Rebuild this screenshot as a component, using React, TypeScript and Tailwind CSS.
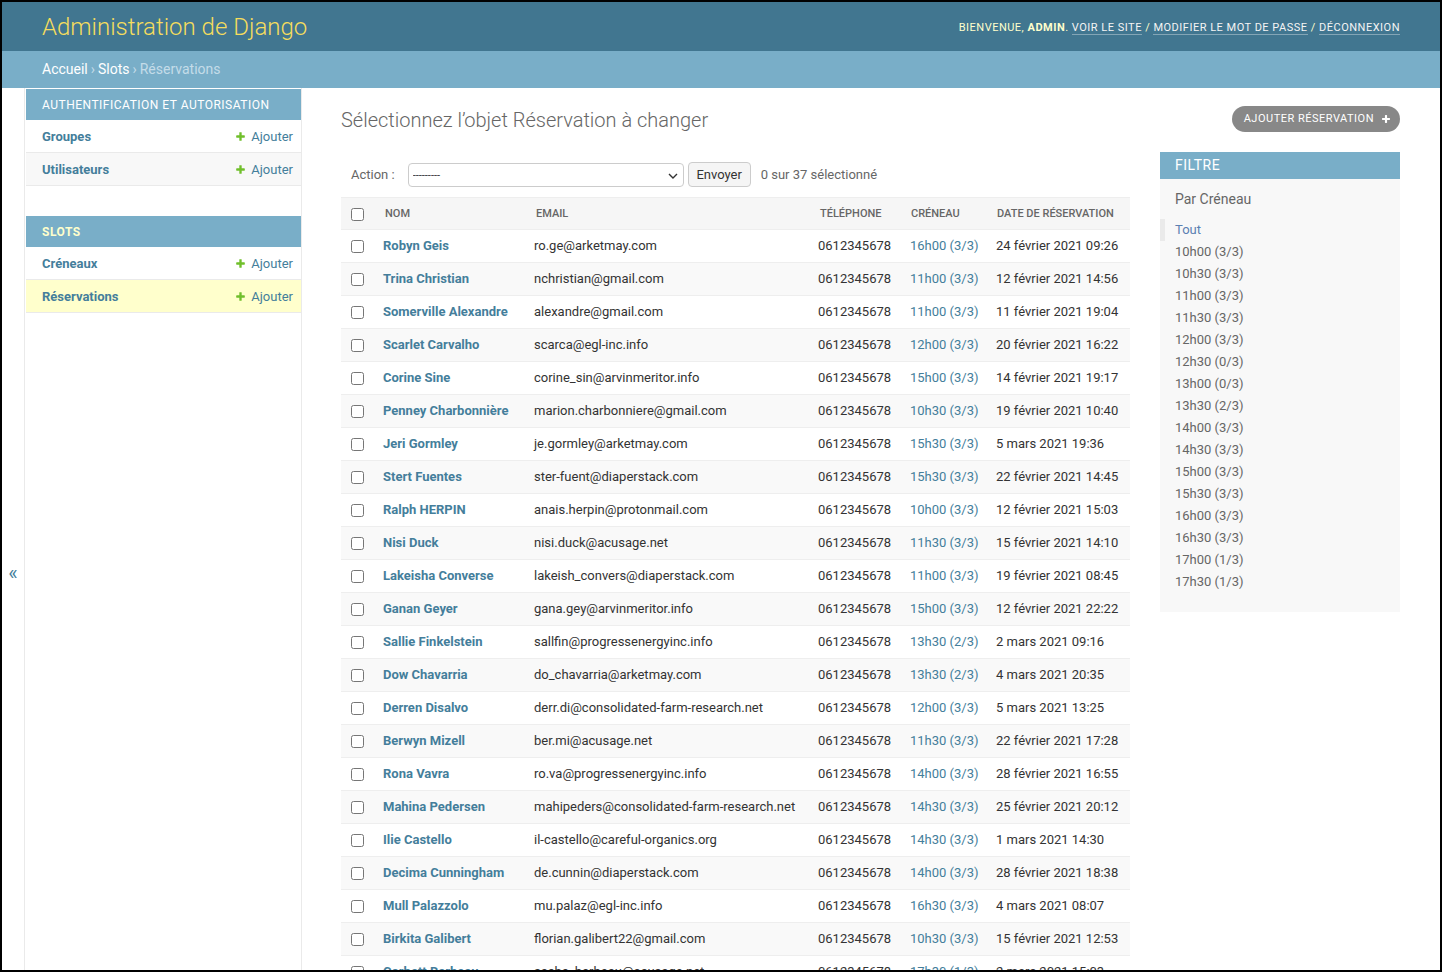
import React from "react";

const rows: [string, string, string, string][] = [
  ["Robyn Geis", "ro.ge@arketmay.com", "16h00 (3/3)", "24 février 2021 09:26"],
  ["Trina Christian", "nchristian@gmail.com", "11h00 (3/3)", "12 février 2021 14:56"],
  ["Somerville Alexandre", "alexandre@gmail.com", "11h00 (3/3)", "11 février 2021 19:04"],
  ["Scarlet Carvalho", "scarca@egl-inc.info", "12h00 (3/3)", "20 février 2021 16:22"],
  ["Corine Sine", "corine_sin@arvinmeritor.info", "15h00 (3/3)", "14 février 2021 19:17"],
  ["Penney Charbonnière", "marion.charbonniere@gmail.com", "10h30 (3/3)", "19 février 2021 10:40"],
  ["Jeri Gormley", "je.gormley@arketmay.com", "15h30 (3/3)", "5 mars 2021 19:36"],
  ["Stert Fuentes", "ster-fuent@diaperstack.com", "15h30 (3/3)", "22 février 2021 14:45"],
  ["Ralph HERPIN", "anais.herpin@protonmail.com", "10h00 (3/3)", "12 février 2021 15:03"],
  ["Nisi Duck", "nisi.duck@acusage.net", "11h30 (3/3)", "15 février 2021 14:10"],
  ["Lakeisha Converse", "lakeish_convers@diaperstack.com", "11h00 (3/3)", "19 février 2021 08:45"],
  ["Ganan Geyer", "gana.gey@arvinmeritor.info", "15h00 (3/3)", "12 février 2021 22:22"],
  ["Sallie Finkelstein", "sallfin@progressenergyinc.info", "13h30 (2/3)", "2 mars 2021 09:16"],
  ["Dow Chavarria", "do_chavarria@arketmay.com", "13h30 (2/3)", "4 mars 2021 20:35"],
  ["Derren Disalvo", "derr.di@consolidated-farm-research.net", "12h00 (3/3)", "5 mars 2021 13:25"],
  ["Berwyn Mizell", "ber.mi@acusage.net", "11h30 (3/3)", "22 février 2021 17:28"],
  ["Rona Vavra", "ro.va@progressenergyinc.info", "14h00 (3/3)", "28 février 2021 16:55"],
  ["Mahina Pedersen", "mahipeders@consolidated-farm-research.net", "14h30 (3/3)", "25 février 2021 20:12"],
  ["Ilie Castello", "il-castello@careful-organics.org", "14h30 (3/3)", "1 mars 2021 14:30"],
  ["Decima Cunningham", "de.cunnin@diaperstack.com", "14h00 (3/3)", "28 février 2021 18:38"],
  ["Mull Palazzolo", "mu.palaz@egl-inc.info", "16h30 (3/3)", "4 mars 2021 08:07"],
  ["Birkita Galibert", "florian.galibert22@gmail.com", "10h30 (3/3)", "15 février 2021 12:53"],
  ["Corbett Barbeau", "sacha_barbeau@acusage.net", "17h30 (1/3)", "2 mars 2021 15:03"],
];

const slots = [
  "10h00 (3/3)", "10h30 (3/3)", "11h00 (3/3)", "11h30 (3/3)", "12h00 (3/3)", "12h30 (0/3)",
  "13h00 (0/3)", "13h30 (2/3)", "14h00 (3/3)", "14h30 (3/3)", "15h00 (3/3)", "15h30 (3/3)",
  "16h00 (3/3)", "16h30 (3/3)", "17h00 (1/3)", "17h30 (1/3)",
];

function Plus({ color, size = 10 }: { color: string; size?: number }) {
  return (
    <svg width={size} height={size} viewBox="0 0 1792 1792" className="shrink-0">
      <path
        fill={color}
        d="M1600 796v192q0 40-28 68t-68 28h-416v416q0 40-28 68t-68 28h-192q-40 0-68-28t-28-68v-416h-416q-40 0-68-28t-28-68v-192q0-40 28-68t68-28h416v-416q0-40 28-68t68-28h192q40 0 68 28t28 68v416h416q40 0 68 28t28 68z"
      />
    </svg>
  );
}

function NavRow({ label, shaded, current }: { label: string; shaded?: boolean; current?: boolean }) {
  return (
    <div
      className={
        "h-[33px] border-b border-[#eaeaea] flex items-center justify-between pl-[16px] pr-[8px] pt-[1px] " +
        (current ? "bg-[#ffffcc]" : shaded ? "bg-[#f8f8f8]" : "bg-white")
      }
    >
      <span className="font-bold text-[#447e9b] text-[13px]">{label}</span>
      <span className="flex items-center gap-[5px] text-[#447e9b] text-[13px]">
        <Plus color="#70bf2b" size={11} />
        Ajouter
      </span>
    </div>
  );
}

function Checkbox() {
  return <input type="checkbox" className="m-0 w-[13px] h-[13px] align-middle block" readOnly />;
}

export default function App() {
  return (
    <div className="w-[1442px] h-[972px] overflow-hidden border-2 border-black bg-white font-['Roboto',sans-serif] text-[13px] text-[#333] flex flex-col">
      {/* Header */}
      <div className="h-[49px] shrink-0 bg-[#417690] flex items-center justify-between px-[40px]">
        <div className="text-[24px] font-light text-[#f5dd5d] leading-[28px]">Administration de Django</div>
        <div className="text-[11px] tracking-[0.5px] uppercase text-[#ffffcc] leading-[14px] mt-[2px]">
          Bienvenue, <strong className="font-bold">admin</strong>.{" "}
          <span className="text-[#f4f4f4] border-b border-[rgba(255,255,255,0.35)]">Voir le site</span> /{" "}
          <span className="text-[#f4f4f4] border-b border-[rgba(255,255,255,0.35)]">Modifier le mot de passe</span> /{" "}
          <span className="text-[#f4f4f4] border-b border-[rgba(255,255,255,0.35)]">Déconnexion</span>
        </div>
      </div>
      {/* Breadcrumbs */}
      <div className="h-[37px] shrink-0 bg-[#79aec8] flex items-center px-[40px] text-[14px] text-[#c4dce8]">
        <span className="text-white">Accueil</span>
        <span className="mx-[3px]">›</span>
        <span className="text-white">Slots</span>
        <span className="mx-[3px]">›</span>
        <span>Réservations</span>
      </div>
      {/* Main */}
      <div className="flex flex-1 min-h-0">
        <div className="w-[23px] shrink-0 h-[972px] border-r border-[#eaeaea] flex items-center justify-center text-[#447e9b] text-[20px] leading-none">
          <span className="mb-[2px]">«</span>
        </div>
        <div className="w-[277px] shrink-0 border-r border-[#eaeaea] pt-[1px] pl-[1px]">
          <div className="mb-[30px]">
            <div className="h-[31px] bg-[#79aec8] text-white flex items-center pl-[16px] text-[12px] tracking-[0.5px] uppercase">
              Authentification et autorisation
            </div>
            <NavRow label="Groupes" />
            <NavRow label="Utilisateurs" shaded />
          </div>
          <div>
            <div className="h-[31px] bg-[#79aec8] text-[#ffffcc] font-bold flex items-center pl-[16px] text-[12px] tracking-[0.5px] uppercase">
              Slots
            </div>
            <NavRow label="Créneaux" />
            <NavRow label="Réservations" current />
          </div>
        </div>
        {/* Content */}
        <div className="flex-1 pl-[39px] pr-[40px] pt-[20px] min-w-0">
          <div className="flex justify-between items-start">
            <h1 className="text-[20px] font-light text-[#666] leading-[24px]">
              Sélectionnez l’objet Réservation à changer
            </h1>
            <div className="mt-[-2px] h-[26px] rounded-full bg-[#888] text-white flex items-center pl-[12px] pr-[9px] gap-[7px] text-[11px] tracking-[0.5px] uppercase">
              Ajouter réservation
              <Plus color="#ffffff" size={10} />
            </div>
          </div>
          <div className="flex gap-[30px] mt-[20px]">
            <div className="flex-1 min-w-0">
              <div className="p-[10px] flex items-center text-[#666] leading-[24px] h-[45px]">
                <span>Action :</span>
                <div className="relative ml-[13px]">
                  <select className="appearance-none w-[276px] h-[24px] border border-[#cccccc] rounded-[4px] bg-white pl-[4px] text-[11px] text-[#333] block">
                    <option>---------</option>
                  </select>
                  <svg width="10" height="6" viewBox="0 0 10 6" className="absolute right-[6px] top-[10px] pointer-events-none">
                    <path d="M1 1l4 4 4-4" stroke="#333" strokeWidth="1.4" fill="none" />
                  </svg>
                </div>
                <button className="ml-[4px] h-[25px] w-[63px] border border-[#cccccc] rounded-[4px] bg-[#f5f5f5] text-[#333] text-[13px] leading-[23px]">
                  Envoyer
                </button>
                <span className="ml-[10px]">0 sur 37 sélectionné</span>
              </div>
              <table className="w-full table-fixed border-collapse">
                <colgroup>
                  <col className="w-[34px]" />
                  <col className="w-[151px]" />
                  <col className="w-[284px]" />
                  <col className="w-[92px]" />
                  <col className="w-[87px]" />
                  <col />
                </colgroup>
                <thead>
                  <tr className="h-[32px] bg-[#f6f6f6] border-t border-b border-[#eeeeee] text-[11px] uppercase text-[#666] text-left">
                    <th className="pl-[10px] font-normal pt-[1px]"><Checkbox /></th>
                    <th className="pl-[10px] font-medium pt-[1px]">Nom</th>
                    <th className="pl-[10px] font-medium pt-[1px]">Email</th>
                    <th className="pl-[10px] font-medium whitespace-nowrap pt-[1px]">Téléphone</th>
                    <th className="pl-[9px] font-medium pt-[1px]">Créneau</th>
                    <th className="pl-[8px] font-medium whitespace-nowrap pt-[1px]">Date de réservation</th>
                  </tr>
                </thead>
                <tbody>
                  {rows.map((r, i) => (
                    <tr
                      key={i}
                      className={"h-[33px] border-b border-[#eeeeee] " + (i % 2 === 1 ? "bg-[#f9f9f9]" : "bg-white")}
                    >
                      <td className="pl-[10px] align-middle"><Checkbox /></td>
                      <td className="pl-[8px] font-bold text-[#447e9b] whitespace-nowrap leading-[16px]">{r[0]}</td>
                      <td className="pl-[8px] whitespace-nowrap leading-[16px]">{r[1]}</td>
                      <td className="pl-[8px] leading-[16px]">0612345678</td>
                      <td className="pl-[8px] text-[#447e9b] whitespace-nowrap leading-[16px]">{r[2]}</td>
                      <td className="pl-[7px] whitespace-nowrap leading-[16px]">{r[3]}</td>
                    </tr>
                  ))}
                </tbody>
              </table>
            </div>
            <div className="w-[240px] shrink-0 self-start bg-[#f8f8f8] pb-[19px]">
              <div className="h-[27px] bg-[#79aec8] text-white flex items-center px-[15px] text-[14px] tracking-[0.5px] uppercase">
                Filtre
              </div>
              <div className="mt-[11px] px-[15px] text-[14px] text-[#666] leading-[18px]">Par Créneau</div>
              <ul className="mt-[11px]">
                <li className="border-l-[5px] border-[#eaeaea] pl-[10px] leading-[22px] text-[#5b80b2]">Tout</li>
                {slots.map((s) => (
                  <li key={s} className="pl-[15px] leading-[22px] text-[#666]">{s}</li>
                ))}
              </ul>
            </div>
          </div>
        </div>
      </div>
    </div>
  );
}
